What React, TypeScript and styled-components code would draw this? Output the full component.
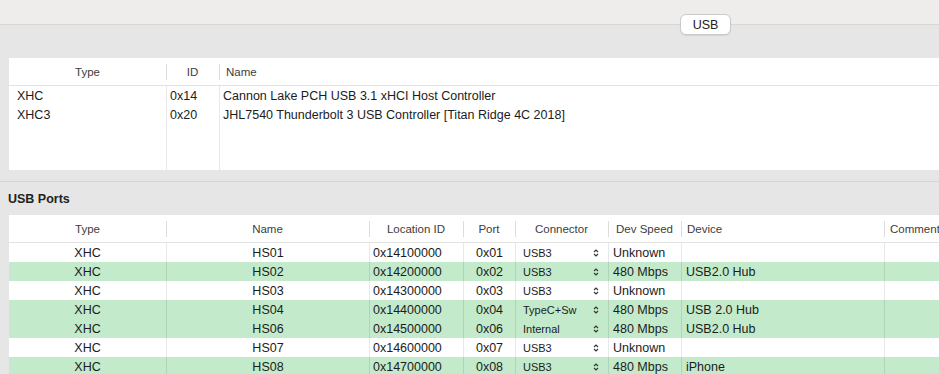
import React from 'react'
import styled, { createGlobalStyle } from 'styled-components'

const GlobalStyle = createGlobalStyle`
  html, body {
    margin: 0;
    padding: 0;
    overflow: hidden;
    background: #e6e6e6;
  }
  body {
    font-family: "Liberation Sans", Arial, sans-serif;
    color: #1c1c1c;
  }
`

const TabHeader = styled.div`
  display: flex;
  height: 24px;
  padding-left: 680px;
  background: #eeedec;
  border-bottom: 1px solid #d6d6d6;
`

const TabButton = styled.div`
  position: relative;
  z-index: 1;
  box-sizing: border-box;
  display: flex;
  align-items: center;
  justify-content: center;
  width: 51px;
  height: 21px;
  margin-top: 14px;
  background: #fff;
  border: 1px solid #cacaca;
  border-radius: 6px;
  box-shadow: 0 1px 1px rgba(0, 0, 0, 0.08);
  font-size: 12.5px;
  color: #222;
`

const TabBody = styled.div`
  padding-top: 33px;
`

const Panel = styled.div<{ $height?: number }>`
  display: flex;
  flex-direction: column;
  margin-left: 9px;
  height: ${(p) => (p.$height ? `${p.$height}px` : 'auto')};
  background: #fff;
  overflow: hidden;
`

const Separator = styled.div`
  margin-top: 11px;
  border-top: 1px solid #d5d5d5;
`

const SectionTitle = styled.div`
  display: flex;
  align-items: center;
  height: 33px;
  padding-left: 8px;
  font-size: 12.5px;
  font-weight: bold;
  color: #222;
`

const HeaderRow = styled.div<{ $cols: string }>`
  display: grid;
  grid-template-columns: ${(p) => p.$cols};
  height: 27px;
  flex-shrink: 0;
  border-bottom: 1px solid #e3e3e3;
`

const HeaderCell = styled.div<{ $align?: 'left' | 'center'; $divider?: boolean; $pad?: number }>`
  position: relative;
  display: flex;
  align-items: center;
  justify-content: ${(p) => (p.$align === 'left' ? 'flex-start' : 'center')};
  padding-left: ${(p) => p.$pad ?? 0}px;
  font-size: 11.5px;
  color: #3d3d3d;
  white-space: nowrap;
  overflow: hidden;

  &::before {
    content: '';
    display: ${(p) => (p.$divider ? 'block' : 'none')};
    position: absolute;
    left: 0;
    top: 6px;
    bottom: 5px;
    width: 1px;
    background: #dcdcdc;
  }
`

const Row = styled.div<{ $cols: string; $green?: boolean; $fill?: boolean }>`
  display: grid;
  grid-template-columns: ${(p) => p.$cols};
  height: ${(p) => (p.$fill ? 'auto' : '19px')};
  flex: ${(p) => (p.$fill ? 1 : 'none')};
  background: ${(p) => (p.$green ? '#c3eacb' : 'transparent')};
`

const Cell = styled.div<{ $align?: 'left' | 'center'; $divider?: boolean; $pad?: number }>`
  display: flex;
  align-items: center;
  justify-content: ${(p) => (p.$align === 'center' ? 'center' : 'flex-start')};
  padding-left: ${(p) => p.$pad ?? 3}px;
  border-left: ${(p) => (p.$divider ? '1px solid rgba(0, 0, 0, 0.09)' : 'none')};
  font-size: 12.5px;
  white-space: nowrap;
  overflow: hidden;
`

const PopupCell = styled(Cell)`
  justify-content: space-between;
  padding-left: 7px;
  padding-right: 9px;
  font-size: 11px;
`

const Chevrons = () => (
  <svg width="6" height="10" viewBox="0 0 6 10">
    <path d="M1 4 L3 2 L5 4 M1 6 L3 8 L5 6" fill="none" stroke="#333" strokeWidth="1.1" />
  </svg>
)

const controllerCols = '157px 53px 1fr'
const portCols = '157px 203px 94px 52px 93px 73px 203px 120px'

const controllers = [
  { type: 'XHC', id: '0x14', name: 'Cannon Lake PCH USB 3.1 xHCI Host Controller' },
  { type: 'XHC3', id: '0x20', name: 'JHL7540 Thunderbolt 3 USB Controller [Titan Ridge 4C 2018]' },
]

type Port = {
  type: string
  name: string
  location: string
  port: string
  connector: string
  speed: string
  device: string
  active: boolean
}

const ports: Port[] = [
  { type: 'XHC', name: 'HS01', location: '0x14100000', port: '0x01', connector: 'USB3', speed: 'Unknown', device: '', active: false },
  { type: 'XHC', name: 'HS02', location: '0x14200000', port: '0x02', connector: 'USB3', speed: '480 Mbps', device: 'USB2.0 Hub', active: true },
  { type: 'XHC', name: 'HS03', location: '0x14300000', port: '0x03', connector: 'USB3', speed: 'Unknown', device: '', active: false },
  { type: 'XHC', name: 'HS04', location: '0x14400000', port: '0x04', connector: 'TypeC+Sw', speed: '480 Mbps', device: 'USB 2.0 Hub', active: true },
  { type: 'XHC', name: 'HS06', location: '0x14500000', port: '0x06', connector: 'Internal', speed: '480 Mbps', device: 'USB2.0 Hub', active: true },
  { type: 'XHC', name: 'HS07', location: '0x14600000', port: '0x07', connector: 'USB3', speed: 'Unknown', device: '', active: false },
  { type: 'XHC', name: 'HS08', location: '0x14700000', port: '0x08', connector: 'USB3', speed: '480 Mbps', device: 'iPhone', active: true },
]

const App = () => {
  return (
    <>
      <GlobalStyle />
      <TabHeader>
        <TabButton>USB</TabButton>
      </TabHeader>
      <TabBody>
        <Panel $height={112}>
          <HeaderRow $cols={controllerCols}>
            <HeaderCell>Type</HeaderCell>
            <HeaderCell $divider>ID</HeaderCell>
            <HeaderCell $divider $align="left" $pad={7}>Name</HeaderCell>
          </HeaderRow>
          {controllers.map((c) => (
            <Row key={c.type} $cols={controllerCols}>
              <Cell $pad={8}>{c.type}</Cell>
              <Cell $divider>{c.id}</Cell>
              <Cell $divider>{c.name}</Cell>
            </Row>
          ))}
          <Row $cols={controllerCols} $fill>
            <Cell />
            <Cell $divider />
            <Cell $divider />
          </Row>
        </Panel>

        <Separator />
        <SectionTitle>USB Ports</SectionTitle>

        <Panel>
          <HeaderRow $cols={portCols}>
            <HeaderCell>Type</HeaderCell>
            <HeaderCell $divider>Name</HeaderCell>
            <HeaderCell $divider>Location ID</HeaderCell>
            <HeaderCell $divider>Port</HeaderCell>
            <HeaderCell $divider>Connector</HeaderCell>
            <HeaderCell $divider>Dev Speed</HeaderCell>
            <HeaderCell $divider $align="left" $pad={6}>Device</HeaderCell>
            <HeaderCell $divider $align="left" $pad={6}>Comment</HeaderCell>
          </HeaderRow>
          {ports.map((p) => (
            <Row key={p.name} $cols={portCols} $green={p.active}>
              <Cell $align="center" $pad={0}>{p.type}</Cell>
              <Cell $divider $align="center" $pad={0}>{p.name}</Cell>
              <Cell $divider>{p.location}</Cell>
              <Cell $divider $align="center" $pad={0}>{p.port}</Cell>
              <PopupCell $divider>
                <span>{p.connector}</span>
                <Chevrons />
              </PopupCell>
              <Cell $divider $pad={4}>{p.speed}</Cell>
              <Cell $divider $pad={4}>{p.device}</Cell>
              <Cell $divider />
            </Row>
          ))}
        </Panel>
      </TabBody>
    </>
  )
}

export default App
